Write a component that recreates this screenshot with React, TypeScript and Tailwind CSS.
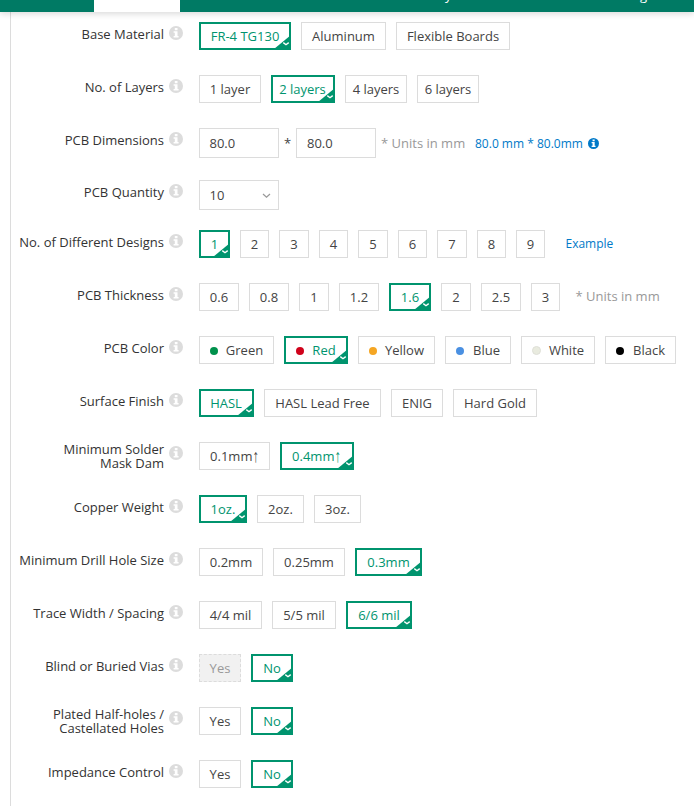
import React from "react";

type Opt = { t: string; w: string; on?: boolean; off?: boolean; dot?: string; arrow?: boolean };

function Info({ className, size }: { className: string; size: number }) {
  return (
    <svg className={className} width={size} height={size} viewBox="0 0 14 14">
      <circle cx="7" cy="7" r="7" fill="currentColor" />
      <path d="M5.8 2h2.7v2.2H5.8zM4.6 5.2h3.9v4.7h1.1v1.7H4.6V9.9h1.2V6.8H4.6z" fill="#fff" />
    </svg>
  );
}

function Option({ o }: { o: Opt }) {
  const look = o.on
    ? "border-2 border-[#00946e] text-[#00946e]"
    : o.off
      ? "border border-dashed border-[#dcdcdc] bg-[#f1f1f1] text-[#999]"
      : "border border-[#dcdcdc] text-[#444]";
  return (
    <div className={`relative flex h-7 shrink-0 items-center justify-center whitespace-nowrap ${look} ${o.w}`}>
      {o.dot && <span className={`mt-px shrink-0 rounded-full ${o.dot}`} />}
      <span className="leading-[18px]">
        {o.t}
        {o.arrow && <span className="inline-block -translate-y-px scale-y-140 font-['Liberation_Sans',sans-serif] leading-none">↑</span>}
      </span>
      {o.on && (
        <svg className="absolute -bottom-px -right-0.5" width="17" height="14" viewBox="0 0 17 14">
          <path d="M17 0v14H0z" fill="#00946e" />
          <path d="M9.3 7.6L12 9.7L14.7 7.6" fill="none" stroke="#fff" strokeWidth="1.4" />
        </svg>
      )}
    </div>
  );
}

function Row({ label, two, h = "h-[53px]", children }: { label: React.ReactNode; two?: boolean; h?: string; children: React.ReactNode }) {
  return (
    <div className={`flex items-start ${h}`}>
      <div className={`w-[153px] shrink-0 whitespace-nowrap text-right leading-[14px] text-[#333] ${two ? "" : "pt-[5px]"}`}>
        {label}
      </div>
      <Info size={14} className="ml-[5px] mr-4 mt-1 shrink-0 text-[#dcdcdc]" />
      {children}
    </div>
  );
}

function Options({ items }: { items: Opt[] }) {
  return (
    <div className="flex gap-2.5">
      {items.map((o) => (
        <Option key={o.t} o={o} />
      ))}
    </div>
  );
}

const yesNo: Opt[] = [{ t: "Yes", w: "w-[42px]" }, { t: "No", w: "w-[42px]", on: true }];

export default function App() {
  return (
    <div className="flex h-[806px] w-[694px] flex-col overflow-hidden bg-white font-['Open_Sans',sans-serif] text-[13px] text-[#444]">
      <header className="z-10 flex h-3 shrink-0 bg-[#007a64] text-[13px] leading-[18px] text-white shadow-[0_2px_6px_rgba(0,0,0,0.15)]">
        <div className="ml-[94px] w-[86px] bg-white" />
        <span className="-mt-[14px] ml-[265px] h-[18px] w-[195px]">y</span>
        <span className="-mt-[14px] h-[18px]">g</span>
      </header>
      <main className="ml-2.5 flex-1 border-l border-[#dcdcdc] pt-2.5">
        <Row label="Base Material">
          <Options items={[{ t: "FR-4 TG130", w: "w-[92px]", on: true }, { t: "Aluminum", w: "w-[85px]" }, { t: "Flexible Boards", w: "w-[114px]" }]} />
        </Row>
        <Row label="No. of Layers">
          <Options items={[{ t: "1 layer", w: "w-[62px]" }, { t: "2 layers", w: "w-16 pr-px", on: true }, { t: "4 layers", w: "w-[62px]" }, { t: "6 layers", w: "w-[62px]" }]} />
        </Row>
        <Row label="PCB Dimensions" h="h-[52px]">
          <div className="flex h-[30px] items-center whitespace-nowrap">
            <div className="flex h-[30px] w-20 items-center border border-[#dcdcdc] pl-[9.5px] pt-0.5">80.0</div>
            <span className="w-[17px] pt-0.5 text-center">*</span>
            <div className="flex h-[30px] w-20 items-center border border-[#dcdcdc] pl-[10px] pt-0.5">80.0</div>
            <span className="ml-[5px] w-[94px] pt-0.5 text-[#999]">* Units in mm</span>
            <span className="w-[113px] pt-0.5 text-[12px] text-[#0079c8]">80.0 mm * 80.0mm</span>
            <Info size={11} className="text-[#0079c8]" />
          </div>
        </Row>
        <Row label="PCB Quantity" h="h-[50px]">
          <div className="flex h-[30px] w-20 items-center justify-between border border-[#dcdcdc] pl-[9.5px] pr-[7px] pt-0.5">
            <span>10</span>
            <svg width="9" height="6" viewBox="0 0 9 6"><path d="M1 1l3.5 3.3L8 1" fill="none" stroke="#999" strokeWidth="1.2" /></svg>
          </div>
        </Row>
        <Row label="No. of Different Designs">
          <Options
            items={[
              { t: "1", w: "w-[31px]", on: true }, { t: "2", w: "w-[29px]" }, { t: "3", w: "w-[30px]" },
              { t: "4", w: "w-[29px]" }, { t: "5", w: "w-[30px]" }, { t: "6", w: "w-[29px]" },
              { t: "7", w: "w-[30px]" }, { t: "8", w: "w-[29px]" }, { t: "9", w: "w-[29px]" },
            ]}
          />
          <span className="ml-[20.5px] mt-[5px] text-[12px] leading-[18px] text-[#0079c8]">Example</span>
        </Row>
        <Row label="PCB Thickness">
          <Options
            items={[
              { t: "0.6", w: "w-10" }, { t: "0.8", w: "w-10" }, { t: "1", w: "w-[30px]" }, { t: "1.2", w: "w-10" },
              { t: "1.6", w: "w-[42px]", on: true }, { t: "2", w: "w-[30px]" }, { t: "2.5", w: "w-10" }, { t: "3", w: "w-[29px]" },
            ]}
          />
          <span className="ml-[15.5px] mt-1 leading-[18px] text-[#999]">* Units in mm</span>
        </Row>
        <Row label="PCB Color">
          <Options
            items={[
              { t: "Green", w: "w-[75px]", dot: "mr-2 size-2 bg-[#00914c]" }, { t: "Red", w: "w-16", on: true, dot: "mr-2 size-2 bg-[#d0021b]" },
              { t: "Yellow", w: "w-[77px]", dot: "mr-2 size-2 bg-[#f5a623]" }, { t: "Blue", w: "w-[66px]", dot: "mr-[9px] size-2 bg-[#4a90e2]" },
              { t: "White", w: "w-[74px]", dot: "mr-2 size-[9px] bg-[#e9ebdf] border border-[#dfe0d8]" }, { t: "Black", w: "w-[71px]", dot: "mr-[9px] size-2 bg-black" },
            ]}
          />
        </Row>
        <Row label="Surface Finish">
          <Options items={[{ t: "HASL", w: "w-[55px] pr-px", on: true }, { t: "HASL Lead Free", w: "w-[117px]" }, { t: "ENIG", w: "w-[52px]" }, { t: "Hard Gold", w: "w-[84px]" }]} />
        </Row>
        <Row two label={<>Minimum Solder<br />Mask Dam</>}>
          <Options items={[{ t: "0.1mm", arrow: true, w: "w-[71px]" }, { t: "0.4mm", arrow: true, w: "w-[74px] pr-px", on: true }]} />
        </Row>
        <Row label="Copper Weight">
          <Options items={[{ t: "1oz.", w: "w-12", on: true }, { t: "2oz.", w: "w-[47px]" }, { t: "3oz.", w: "w-[47px]" }]} />
        </Row>
        <Row label="Minimum Drill Hole Size">
          <Options items={[{ t: "0.2mm", w: "w-16" }, { t: "0.25mm", w: "w-[72px]" }, { t: "0.3mm", w: "w-[67px]", on: true }]} />
        </Row>
        <Row label="Trace Width / Spacing">
          <Options items={[{ t: "4/4 mil", w: "w-[63px]" }, { t: "5/5 mil", w: "w-16" }, { t: "6/6 mil", w: "w-[66px]", on: true }]} />
        </Row>
        <Row label="Blind or Buried Vias">
          <Options items={[{ t: "Yes", w: "w-[42px]", off: true }, { t: "No", w: "w-[42px]", on: true }]} />
        </Row>
        <Row two label={<>Plated Half-holes /<br />Castellated Holes</>}>
          <Options items={yesNo} />
        </Row>
        <Row label="Impedance Control" h="h-[46px]">
          <Options items={yesNo} />
        </Row>
      </main>
    </div>
  );
}
